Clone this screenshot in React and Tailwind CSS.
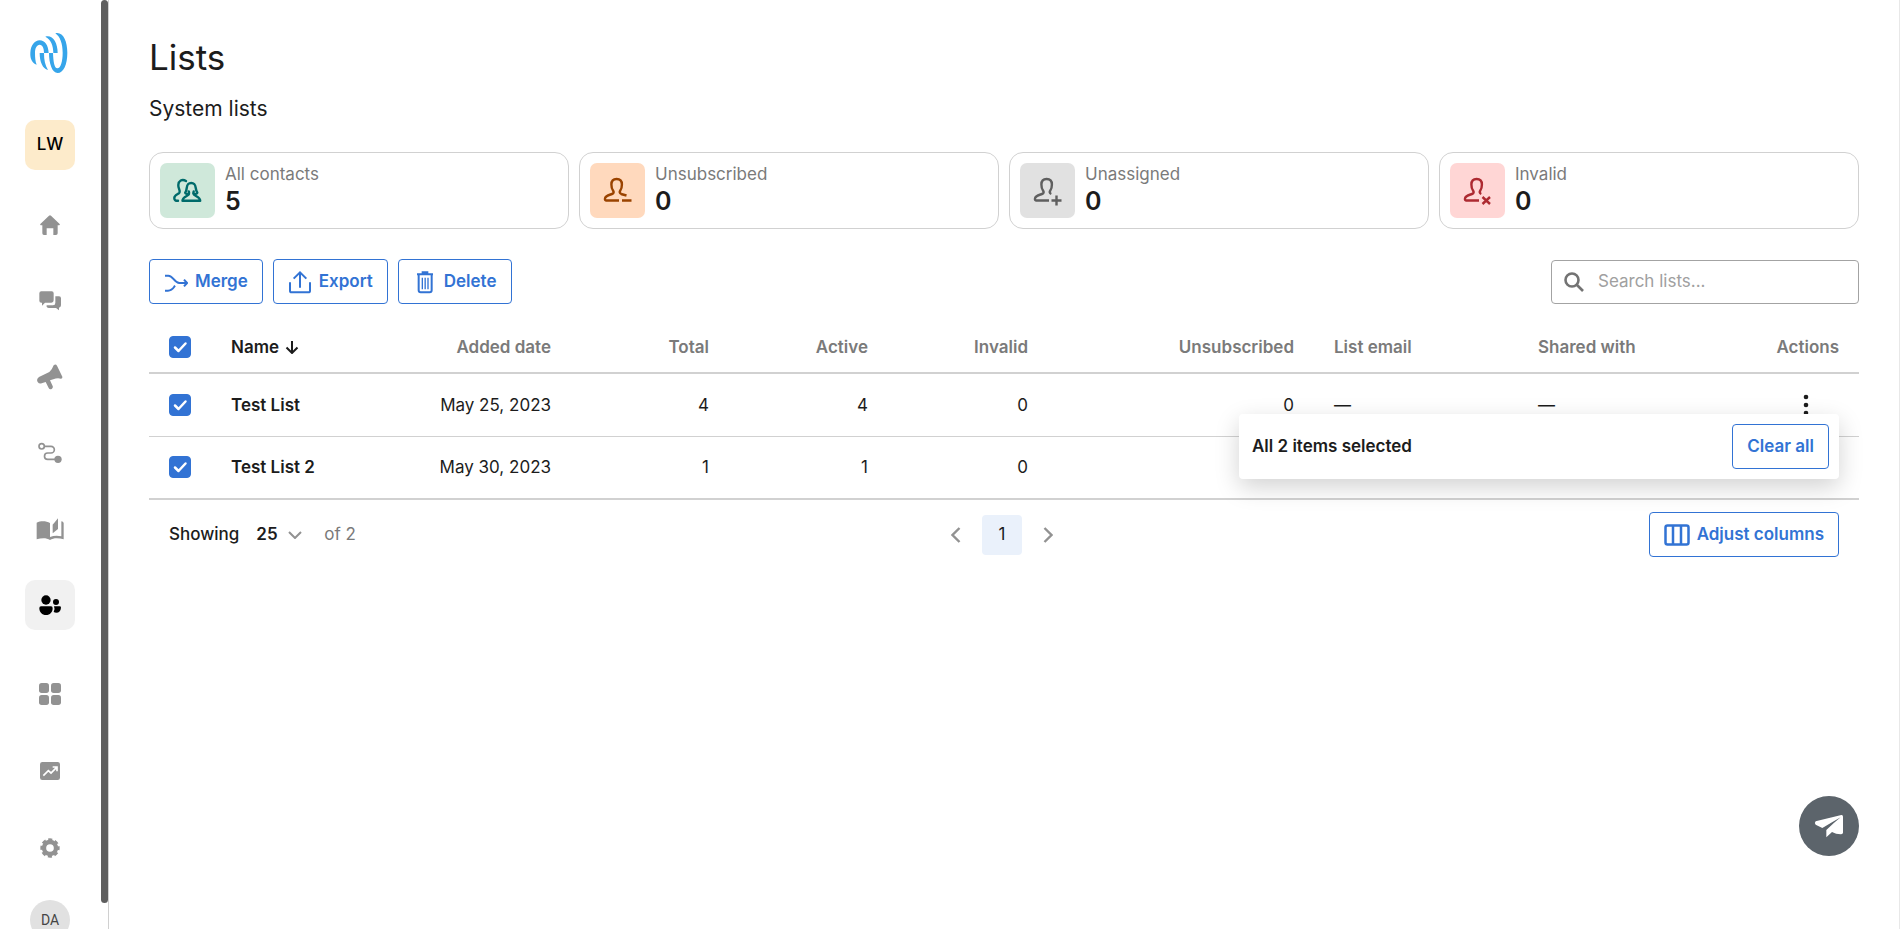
import React, { useState } from "react";

const lists = [
  { name: "Test List", date: "May 25, 2023", total: 4, active: 4, invalid: 0, unsubscribed: 0 },
  { name: "Test List 2", date: "May 30, 2023", total: 1, active: 1, invalid: 0, unsubscribed: 0 },
];

function Logo() {
  return (
    <svg viewBox="87 93 126 132" className="w-[42px] h-11" fill="#36a5ea">
      <path d="M110 194C96 188 90 176 91 158C92 136 104 121 119 121C135 121 145 136 146 159H132C132 145 128 134 119 134C110 134 105 145 105 158C105 172 106 184 110 194Z" />
      <path d="M119 159H132C132 180 135 195 144 210C128 206 119 186 119 159Z" />
      <path d="M136 110C158 104 173 128 173 159H160C160 138 153 118 136 110Z" />
      <path d="M147 159H159C160 185 163 205 172 205C182 205 188 184 188 158C188 130 180 110 166 100C188 94 202 122 202 158C202 194 190 219 173 219C156 219 147 190 147 159Z" />
    </svg>
  );
}

const mainNav = [
  {
    label: "Home",
    icon: (
      <svg viewBox="117 642 66 66" className="size-[22px]" fill="currentColor">
        <path d="M147 647q3-3 6 0l26 25q2 4-2 4h-4v24q0 5-5 5h-8v-20h-20v20h-8q-5 0-5-5v-24h-4q-4 0-2-4Z" />
      </svg>
    ),
  },
  {
    label: "Messages",
    icon: (
      <svg viewBox="117 867 66 66" className="size-[22px]" fill="currentColor">
        <path d="M124 871h31q6 0 6 6v21q0 7-7 7h-19l-9 9v-9h-2q-6 0-6-6v-22q0-6 6-6Z" />
        <path d="M166 886h11q6 0 6 6v21q0 6-6 7v8l-9-7h-22q-5 0-7-6q0-2 3-2h17q7 0 7-7Z" />
      </svg>
    ),
  },
  {
    label: "Campaigns",
    icon: (
      <svg viewBox="111 104 78 78" className="size-[26px]" fill="currentColor">
        <path d="M161 108q6-5 10 1l16 33q1 5-4 6Q171 145 160 150l-10 3l8 17q2 6-3 9q-6 3-9-3l-9-18l-12 4q-8 2-12-4q-5-9 4-15l31-15Q156 122 161 108Z" />
      </svg>
    ),
  },
  {
    label: "Workflows",
    icon: (
      <svg viewBox="114 336 72 72" className="size-6" fill="none" stroke="currentColor" strokeWidth="5">
        <circle cx="125" cy="352" r="8" />
        <path d="M134 352h19a10 10 0 0 1 0 20h-10a9.5 9.5 0 0 0 0 19h24" />
        <circle cx="174" cy="391" r="11" fill="currentColor" stroke="none" />
      </svg>
    ),
  },
  {
    label: "Templates",
    icon: (
      <svg viewBox="108 552 84 84" className="size-7" fill="currentColor">
        <path d="M110 575C122 569 138 569 150 576V627C140 620 125 620 110 625Z" />
        <path d="M150 627C160 620 176 620 191 625V576Q190 571 184 571V616C172 613 160 614 150 618Z" />
        <path d="M158 581L174 562V594L158 607Z" />
      </svg>
    ),
  },
  {
    label: "Contacts",
    active: true,
    icon: (
      <svg viewBox="117 795 66 66" className="size-[22px]" fill="currentColor">
        <circle cx="138" cy="813" r="14" />
        <circle cx="168" cy="819" r="9" />
        <path d="M123 832h30q5 0 5 5c0 13-8 21-20 21s-20-8-20-21q0-5 5-5Z" />
        <path d="M162 832h17q4 0 4 4c-1 10-6 15-14 15q-4 0-8-2q5-8 1-17Z" />
      </svg>
    ),
  },
];

const secondaryNav = [
  {
    label: "Apps",
    icon: (
      <svg viewBox="117 129 66 66" className="size-[22px]" fill="currentColor">
        <rect x="117" y="129" width="30" height="30" rx="8" />
        <rect x="153" y="129" width="30" height="30" rx="8" />
        <rect x="117" y="165" width="30" height="30" rx="8" />
        <rect x="153" y="165" width="30" height="30" rx="8" />
      </svg>
    ),
  },
  {
    label: "Reports",
    icon: (
      <svg viewBox="117 360 66 66" className="size-[22px]">
        <rect x="120" y="366" width="60" height="54" rx="7" fill="currentColor" />
        <path d="M130 407L145 392L153 399L170 382M158 381H171V394" fill="none" stroke="white" strokeWidth="5" />
      </svg>
    ),
  },
  {
    label: "Settings",
    icon: (
      <svg viewBox="117 594 66 66" className="size-[22px]" fill="none" stroke="currentColor">
        <circle cx="150" cy="627" r="18" strokeWidth="13" />
        <circle cx="150" cy="627" r="25" strokeWidth="8" strokeDasharray="12 7.63" strokeDashoffset="6" />
      </svg>
    ),
  },
];

function NavItem({ item }) {
  return (
    <a
      href="#"
      aria-label={item.label}
      className={
        item.active
          ? "size-[50px] rounded-[10px] flex items-center justify-center bg-[#f1f1f1] text-black"
          : "size-[50px] rounded-[10px] flex items-center justify-center text-[#929292]"
      }
    >
      {item.icon}
    </a>
  );
}

function Sidebar() {
  return (
    <aside className="w-[109px] h-screen shrink-0 overflow-hidden flex border-r border-[#d0d0d0]">
      <div className="w-[100px] shrink-0 flex flex-col items-center pt-[31px]">
        <a href="#" aria-label="Dashboard"><Logo /></a>
        <button className="mt-[45px] size-[50px] shrink-0 rounded-[10px] bg-[#fdebcb] text-[17px] font-medium text-black">
          LW
        </button>
        <nav className="mt-[30px] flex flex-col gap-[26px]">
          {mainNav.map((item) => <NavItem key={item.label} item={item} />)}
        </nav>
        <nav className="mt-[39px] flex flex-col gap-[27px]">
          {secondaryNav.map((item) => <NavItem key={item.label} item={item} />)}
        </nav>
        <button className="mt-[27px] size-10 shrink-0 rounded-full bg-[#e1e1e1] font-[Roboto] text-sm text-[#444]">
          DA
        </button>
      </div>
      <div className="ml-px w-[7px] mb-[26px] rounded-full bg-[#5e5e5e]" />
    </aside>
  );
}

function ContactsIcon() {
  return (
    <svg viewBox="0 0 30 30" className="size-[30px]" fill="none" stroke="currentColor" strokeWidth="2.400" strokeLinecap="round" strokeLinejoin="round">
      <path d="M13 5C9 2.500 5.500 5 5.300 9C5.100 13 7.500 14 6.500 16.500C5.500 18.500 1.500 18.500 1.300 22Q1.200 25 5 24.800" />
      <path d="M15.800 15.500C16.500 17.500 16 18 14.500 18C12.500 18 11.500 17 12.800 15.500C14.500 13 12.500 7 18.200 7S22 13 23.800 15.500C25 17 24 18 22 18C20.300 18 20 17.500 20.700 15.500" />
      <path d="M16 18C16 20 9.500 20.500 9.500 24.800H27.200C27.200 20.500 20.600 20 20.600 18" />
    </svg>
  );
}

// Same silhouette for the three single-person states, only the badge differs
function PersonIcon({ badge }) {
  return (
    <svg viewBox="0 0 30 30" className="size-[30px]" fill="none" stroke="currentColor" strokeWidth="2.400">
      <path d="M16 24.500H3Q1.800 24.500 2 22.500C2.300 19.500 6 19 9 18C11 17.300 11 16 10 14.500C8.500 12.500 8.400 11.500 8.400 8.500C8.400 5 10 3 13.600 3S18.900 5 18.900 8.500C18.900 11.500 18.800 12.500 17.300 14.500C16.300 16 16.500 17.300 18.300 18" />
      {badge === "minus" && <path d="M18 18L23.500 19.500M19 24.500H28.500" />}
      {badge === "plus" && <path d="M18.500 24.500H28.500M23.500 19.500V29.500" />}
      {badge === "cross" && <path d="M19.500 21L27 28M27 21L19.500 28" />}
    </svg>
  );
}

const systemLists = [
  { label: "All contacts", value: 5, tile: "bg-[#cfe8da] text-[#006b6b]", icon: <ContactsIcon /> },
  { label: "Unsubscribed", value: 0, tile: "bg-[#ffd9bd] text-[#9a4300]", icon: <PersonIcon badge="minus" /> },
  { label: "Unassigned", value: 0, tile: "bg-[#e1e1e1] text-[#5f5f5f]", icon: <PersonIcon badge="plus" /> },
  { label: "Invalid", value: 0, tile: "bg-[#ffd6d5] text-[#ad2a31]", icon: <PersonIcon badge="cross" /> },
];

function SystemCard({ card }) {
  return (
    <a href="#" className="flex gap-[10px] p-[10px] border border-[#d1d1d1] rounded-[14px]">
      <span className={`size-[55px] rounded-[7px] flex items-center justify-center ${card.tile}`}>
        {card.icon}
      </span>
      <span className="flex flex-col">
        <span className="text-[17px] leading-[23px] text-[#7a7a7a]">{card.label}</span>
        <span className="text-[25px] leading-[30px] font-semibold">{card.value}</span>
      </span>
    </a>
  );
}

function OutlineButton({ icon, children, onClick }) {
  return (
    <button
      onClick={onClick}
      className="h-[45px] px-[14px] flex items-center gap-[7px] rounded border border-[#3273d4] bg-white text-[17px] font-semibold text-[#3273d4]"
    >
      {icon}
      {children}
    </button>
  );
}

const mergeIcon = (
  <svg viewBox="100 84 72 72" className="size-6" fill="none" stroke="currentColor" strokeWidth="6">
    <path d="M103 101h10c15 0 17 22 33 22h21M103 146h9c12 0 16-8 21-15M160 113l9 10l-9 10" />
  </svg>
);

const exportIcon = (
  <svg viewBox="468 87 72 72" className="size-6" fill="none" stroke="currentColor" strokeWidth="6">
    <path d="M474 124v25q0 5 5 5h50q5 0 5-5v-25M504 140V95M485 113l19-19l19 19" />
  </svg>
);

const deleteIcon = (
  <svg viewBox="846 86 72 72" className="size-6" fill="none" stroke="currentColor" strokeWidth="6">
    <path d="M858 99h48M872 93h20M863 102v45q0 6 6 6h27q6 0 6-6v-45" />
    <path d="M874 109v35M882.500 109v35M891 109v35" strokeWidth="4" />
  </svg>
);

const columnsIcon = (
  <svg viewBox="0 0 26 22" className="w-[26px] h-[22px]" fill="none" stroke="currentColor" strokeWidth="2.500">
    <rect x="1.500" y="1.500" width="23" height="19" rx="2" />
    <path d="M9 1v20M17 1v20" />
  </svg>
);

function Checkbox({ label, checked, onChange }) {
  return (
    <span className="grid size-[22px]">
      <input
        type="checkbox"
        aria-label={label}
        checked={checked}
        onChange={onChange}
        className="col-start-1 row-start-1 size-[22px] appearance-none rounded border border-[#929292] checked:border-[#3273d4] checked:bg-[#3273d4]"
      />
      {checked && (
        <svg viewBox="0 0 22 22" className="pointer-events-none col-start-1 row-start-1" fill="none" stroke="white" strokeWidth="2.500" strokeLinecap="round" strokeLinejoin="round">
          <path d="M6 11.500L9.500 15L16.500 7.500" />
        </svg>
      )}
    </span>
  );
}

function ListsTable({ selected, setSelected }) {
  const allChecked = selected.length === lists.length;

  const toggle = (name) =>
    setSelected(selected.includes(name) ? selected.filter((n) => n !== name) : [...selected, name]);

  const toggleAll = () => setSelected(allChecked ? [] : lists.map((l) => l.name));

  return (
    <div className="relative mt-[18px]">
      <table className="w-full table-fixed border-collapse text-[17px] leading-6">
        <colgroup>
          <col className="w-[62px]" />
          <col className="w-[200px]" />
          <col className="w-[160px]" />
          <col className="w-[158px]" />
          <col className="w-[159px]" />
          <col className="w-[160px]" />
          <col className="w-[266px]" />
          <col className="w-[204px]" />
          <col className="w-[181px]" />
          <col className="w-[160px]" />
        </colgroup>
        <thead>
          <tr className="h-[51px] border-b-2 border-[#d1d1d1] text-right text-[#7a7a7a] [&>th]:px-5 [&>th]:font-semibold">
            <th><Checkbox label="Select all" checked={allChecked} onChange={toggleAll} /></th>
            <th className="text-left text-[#1c1c1c]">
              <button className="flex items-center gap-[6px]">
                Name
                <svg viewBox="0 0 14 14" className="size-[14px]" fill="none" stroke="currentColor" strokeWidth="2">
                  <path d="M7 1v12M1.500 7.500L7 13l5.500-5.500" />
                </svg>
              </button>
            </th>
            <th>Added date</th>
            <th>Total</th>
            <th>Active</th>
            <th>Invalid</th>
            <th>Unsubscribed</th>
            <th className="text-left">List email</th>
            <th className="text-left">Shared with</th>
            <th>Actions</th>
          </tr>
        </thead>
        <tbody className="border-b-2 border-[#d1d1d1]">
          {lists.map((l) => (
            <tr key={l.name} className="h-[63px] border-t border-[#d1d1d1] text-right first:border-t-0 [&>td]:px-5">
              <td><Checkbox label={l.name} checked={selected.includes(l.name)} onChange={() => toggle(l.name)} /></td>
              <td className="text-left"><a href="#" className="font-semibold">{l.name}</a></td>
              <td>{l.date}</td>
              <td>{l.total}</td>
              <td>{l.active}</td>
              <td>{l.invalid}</td>
              <td>{l.unsubscribed}</td>
              <td className="text-left">—</td>
              <td className="text-left">—</td>
              <td>
                <button aria-label="Row actions" className="mr-[22px] block ml-auto">
                  <svg viewBox="0 0 22 22" className="size-[22px]" fill="currentColor">
                    <circle cx="11" cy="3" r="2.300" />
                    <circle cx="11" cy="11" r="2.300" />
                    <circle cx="11" cy="19" r="2.300" />
                  </svg>
                </button>
              </td>
            </tr>
          ))}
        </tbody>
      </table>

      {allChecked && (
        <div className="absolute right-5 bottom-[21px] w-[600px] p-[10px] pl-[13px] flex items-center justify-between rounded bg-white shadow-[0_8px_24px_rgba(0,0,0,0.18)]">
          <span className="text-[17px] font-semibold">All 2 items selected</span>
          <OutlineButton onClick={() => setSelected([])}>Clear all</OutlineButton>
        </div>
      )}
    </div>
  );
}

function TableFooter() {
  return (
    <div className="mt-3 px-5 grid grid-cols-3 items-center text-[17px]">
      <div className="flex items-center">
        <label htmlFor="page-size" className="font-medium">Showing</label>
        <span className="ml-[17px] grid w-[46px] items-center">
          <select id="page-size" defaultValue="25" className="col-start-1 row-start-1 appearance-none font-semibold">
            <option>25</option>
            <option>50</option>
          </select>
          <svg viewBox="0 0 14 8" className="pointer-events-none col-start-1 row-start-1 w-[14px] h-2 justify-self-end" fill="none" stroke="#929292" strokeWidth="2">
            <path d="M1 1l6 6l6-6" />
          </svg>
        </span>
        <span className="ml-[22px] text-[#7a7a7a]">of 2</span>
      </div>
      <div className="pr-1 flex items-center justify-center gap-[21px]">
        <button aria-label="Previous page">
          <svg viewBox="0 0 10 16" className="w-[10px] h-4" fill="none" stroke="#929292" strokeWidth="2.400">
            <path d="M8.500 1L1.500 8l7 7" />
          </svg>
        </button>
        <button className="size-10 rounded bg-[#eaf1fb]">1</button>
        <button aria-label="Next page">
          <svg viewBox="0 0 10 16" className="w-[10px] h-4" fill="none" stroke="#929292" strokeWidth="2.400">
            <path d="M1.500 1l7 7l-7 7" />
          </svg>
        </button>
      </div>
      <div className="flex justify-end">
        <OutlineButton icon={columnsIcon}>Adjust columns</OutlineButton>
      </div>
    </div>
  );
}

export default function App() {
  const [selected, setSelected] = useState(lists.map((l) => l.name));

  return (
    <div className="h-screen flex overflow-hidden bg-white font-[Inter,sans-serif] text-[#1c1c1c]">
      <Sidebar />
      <main className="flex-1 min-w-0 pl-10 pr-10 pt-9 border-r border-[#e8e8e8]">
        <h1 className="text-[35px] leading-[42px]">Lists</h1>
        <h2 className="mt-[17px] text-[21px] leading-7">System lists</h2>

        <section className="mt-[29px] grid grid-cols-4 gap-[10px]">
          {systemLists.map((card) => <SystemCard key={card.label} card={card} />)}
        </section>

        <div className="mt-[30px] flex items-center justify-between">
          <div className="flex gap-[10px]">
            <OutlineButton icon={mergeIcon}>Merge</OutlineButton>
            <OutlineButton icon={exportIcon}>Export</OutlineButton>
            <OutlineButton icon={deleteIcon}>Delete</OutlineButton>
          </div>
          <label className="w-[308px] h-11 px-3 flex items-center gap-[14px] border border-[#a3a3a3] rounded">
            <svg viewBox="0 0 20 20" className="size-5 shrink-0" fill="none" stroke="#737373" strokeWidth="2.600">
              <circle cx="8" cy="8" r="6.500" />
              <path d="M12.500 12.500L19 19" />
            </svg>
            <input
              type="search"
              aria-label="Search lists"
              placeholder="Search lists..."
              className="min-w-0 flex-1 text-[17px] outline-none placeholder:text-[#a0a0a0]"
            />
          </label>
        </div>

        <ListsTable selected={selected} setSelected={setSelected} />
        <TableFooter />
      </main>

      <button
        aria-label="Open chat"
        className="fixed right-[41px] bottom-[73px] size-[60px] rounded-full bg-[#5c646b] flex items-center justify-center"
      >
        <svg viewBox="162 132 90 72" className="w-[30px] h-6" fill="white">
          <path d="M167 154L244 135Q249 134 249 140V188Q248 193 242 193Q228 193 216 186L199 202V180Q222 158 242 142Q216 157 187 174L167 164Q162 159 167 154Z" />
        </svg>
      </button>
    </div>
  );
}
